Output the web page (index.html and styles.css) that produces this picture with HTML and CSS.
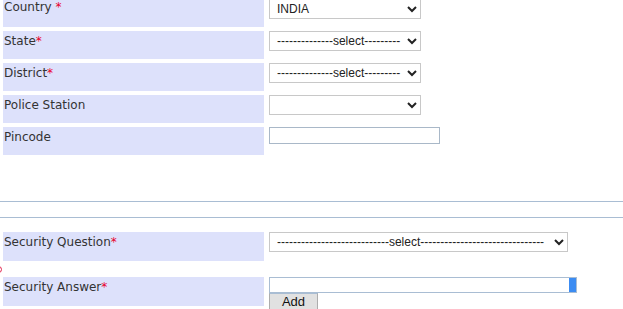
FILE: index.html
```html
<!DOCTYPE html>
<html lang="en">
<head>
    <meta charset="UTF-8">
    <meta name="viewport" content="width=device-width, initial-scale=1.0">
    <title>Registration</title>
    <link rel="stylesheet" href="styles.css">
</head>
<body>
    <div class="address">
        <div class="label">Country <span class="req">*</span></div>
        <div class="field">
            <select class="sel">
                <option>INDIA</option>
            </select>
        </div>

        <div class="label">State<span class="req">*</span></div>
        <div class="field">
            <select class="sel">
                <option>--------------select---------</option>
            </select>
        </div>

        <div class="label">District<span class="req">*</span></div>
        <div class="field">
            <select class="sel">
                <option>--------------select---------</option>
            </select>
        </div>

        <div class="label">Police Station</div>
        <div class="field">
            <select class="sel">
                <option></option>
            </select>
        </div>

        <div class="label">Pincode</div>
        <div class="field">
            <input type="text" class="pin">
        </div>
    </div>

    <hr class="rule rule-top">
    <hr class="rule">

    <div class="security">
        <div class="label">Security Question<span class="req">*</span></div>
        <div class="field">
            <select class="sel sel-wide">
                <option>----------------------------select-------------------------------</option>
            </select>
        </div>
    </div>

    <div class="marker"><span class="dot"></span></div>

    <div class="security">
        <div class="label">Security Answer<span class="req">*</span></div>
        <div class="field">
            <div class="answer">
                <input type="text" class="ans">
                <span class="ans-bar"></span>
            </div>
            <button type="button" class="add">Add</button>
        </div>
    </div>
</body>
</html>
```

FILE: styles.css
```css
body { margin: 0; font-family: "DejaVu Sans", Verdana, sans-serif; font-size: 12px; color: #333; overflow: hidden; }
.address { display: grid; grid-template-columns: 261px 1fr; column-gap: 5px; row-gap: 4px; margin: -1px 0 0 3px; }
.label { height: 24px; padding: 4px 0 0 1px; background-color: #dde1fb; line-height: 12px; }
.address .label:first-child { padding-top: 2px; height: 26px; }
.req { color: #e8002a; }
.sel { display: block; width: 152px; height: 20px; margin: 0; padding: 0 0 0 3px; border: 1px solid #c8c8c8; border-radius: 0; background-color: #fff; font-family: "Liberation Sans", Arial, sans-serif; font-size: 12px; color: #222; }
.sel-wide { width: 299px; }
.pin { display: block; width: 171px; height: 17px; margin: 0; padding: 0; border: 1px solid #a9b8c8; box-sizing: border-box; }
.rule { height: 0; margin: 0; border: 0; border-top: 1px solid #a9bdd3; }
.rule-top { margin-top: 46px; }
.rule + .rule { margin-top: 15px; }
.security { display: grid; grid-template-columns: 261px 1fr; column-gap: 5px; margin-left: 3px; }
.security .label { height: 25px; }
.rule + .rule + .security { margin-top: 14px; }
.marker { height: 16px; position: relative; overflow: hidden; }
.dot { position: absolute; left: -5px; top: 5px; width: 5px; height: 5px; border: 1px solid #e0204a; border-radius: 50%; }
.answer { display: flex; width: 308px; height: 16px; border: 1px solid #a9bdd3; box-sizing: border-box; }
.ans { flex: 1; height: 14px; margin: 0; padding: 0; border: 0; outline: none; }
.ans-bar { width: 7px; background-color: #3c8cf2; }
.add { display: block; width: 49px; height: 17px; margin: 0; padding: 0; border: 1px solid #adadad; border-top-color: #a9bdd3; background-color: #e1e1e1; font-family: "Liberation Sans", Arial, sans-serif; font-size: 13px; line-height: 15px; color: #111; }
```
